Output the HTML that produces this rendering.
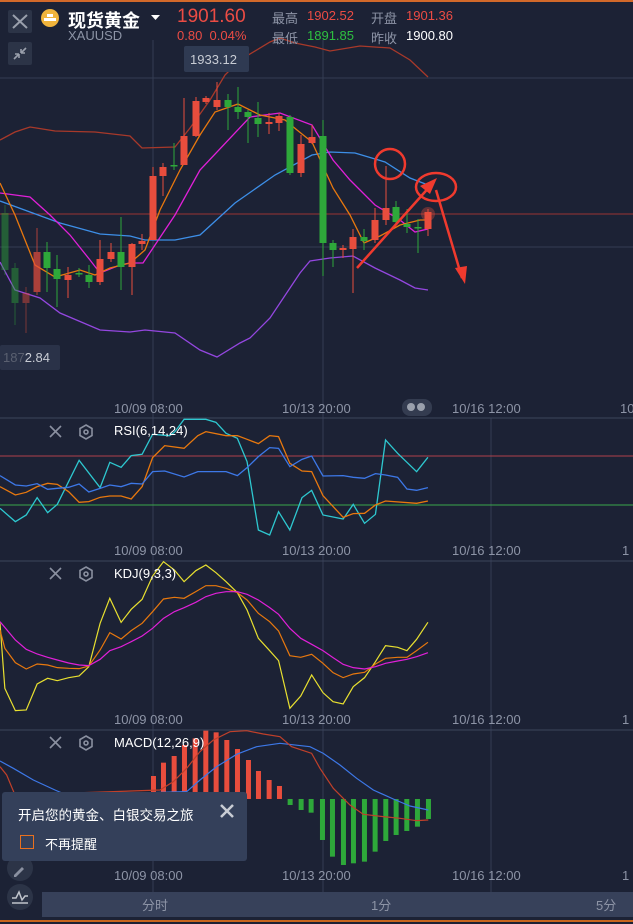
<!DOCTYPE html>
<html><head><meta charset="utf-8"><style>
body{margin:0;width:633px;height:924px;background:#1c2235;overflow:hidden;position:relative;font-family:"Liberation Sans","Noto Sans CJK SC",sans-serif}
.a{position:absolute;white-space:nowrap}
.ax{position:absolute;color:#8d94a6;font-size:13px}
</style></head><body>
<svg class="a" style="left:0;top:0" width="633" height="924">
<rect x="0" y="0" width="633" height="2" fill="#d2692a"/>
<g stroke="#343c52" stroke-width="1">
<line x1="153" y1="40" x2="153" y2="892"/><line x1="323" y1="40" x2="323" y2="892"/><line x1="491" y1="418" x2="491" y2="892"/>
<line x1="0" y1="78" x2="633" y2="78"/><line x1="0" y1="247" x2="633" y2="247"/>
</g>
<g stroke="#3d465c"><line x1="0" y1="418" x2="633" y2="418"/><line x1="0" y1="561" x2="633" y2="561"/><line x1="0" y1="730" x2="633" y2="730"/></g>
<line x1="0" y1="214" x2="633" y2="214" stroke="#9a3434"/>
<g fill="none" stroke-width="1.3">
<polyline stroke="#a8392a" points="0,140 15,132 30,127 55,131 95,132 130,136 142,148 175,147 190,128 210,100 225,75 240,60 270,42 280,38 295,43 315,47 330,51 360,46 390,48 410,60 428,77"/>
<polyline stroke="#3d8fe8" points="0,201 30,212 60,223 100,234 130,236 145,240 175,240 200,235 235,203 275,175 312,155 330,152 355,153 385,162 410,178 428,185"/>
<polyline stroke="#9447e0" points="0,262 15,290 40,298 60,313 100,330 130,332 145,330 175,333 200,350 217,357 240,343 250,338 270,318 300,273 310,261 330,258 353,256 375,268 400,280 415,288 428,290"/>
<polyline stroke="#e020d8" points="0,193 30,197 50,215 70,235 90,260 100,273 120,265 130,263 143,263 155,245 175,215 200,170 250,117 280,113 312,125 333,160 350,180 375,205 400,220 415,232 428,229"/>
<polyline stroke="#e8780e" points="0,183 15,215 35,265 55,277 80,270 95,275 110,268 130,263 145,250 160,210 180,170 200,135 215,112 238,104 260,115 285,120 297,130 312,142 333,188 350,215 364,243 380,236 400,225 420,220 428,220"/>
</g>
<g stroke-width="1">
<g opacity="0.45"><line x1="5" y1="205" x2="5" y2="275" stroke="#2ea83a"/><rect x="1.5" y="213" width="7" height="57" fill="#2ea83a"/>
<line x1="15" y1="263" x2="15" y2="325" stroke="#2ea83a"/><rect x="11.5" y="268" width="7" height="35" fill="#2ea83a"/>
<line x1="26" y1="287" x2="26" y2="333" stroke="#e84d3d"/><rect x="22.5" y="293" width="7" height="10" fill="#e84d3d"/></g>
<g opacity="0.7"><line x1="37" y1="228" x2="37" y2="295" stroke="#e84d3d"/><rect x="33.5" y="252" width="7" height="40" fill="#e84d3d"/></g>
</g>
<g>
<path stroke="#2ea83a" d="M47 242V292M57 255V307M79 268V277M89 265V288M121 217V290M174 143V170M228 94V130M238 87V119M248 110V143M258 102V137M290 115V175M323 120V276M333 240V267M364 229V250M396 201V225M407 209V233M418 219V253"/>
<path stroke="#e84d3d" d="M68 267V298M100 240V285M111 243V262M132 243V295M142 234V250M153 167V240M163 163V196M184 98V165M196 97V137M206 96V104M217 82V110M269 113V134M279 113V131M301 135V177M312 125V144M343 245V258M353 229V293M375 208V243M386 166V225M428 209V236"/>
<g fill="#2ea83a"><rect x="43.5" y="252" width="7" height="16"/><rect x="53.5" y="269" width="7" height="10"/><rect x="75.5" y="273" width="7" height="1.5"/><rect x="85.5" y="275" width="7" height="7"/><rect x="117.5" y="252" width="7" height="15"/><rect x="170.5" y="165" width="7" height="1.5"/><rect x="224.5" y="100" width="7" height="7"/><rect x="234.5" y="107" width="7" height="5"/><rect x="244.5" y="112" width="7" height="5"/><rect x="254.5" y="118" width="7" height="6"/><rect x="286.5" y="117" width="7" height="56"/><rect x="319.5" y="136" width="7" height="107"/><rect x="329.5" y="243" width="7" height="7"/><rect x="360.5" y="237" width="7" height="4"/><rect x="392.5" y="207" width="7" height="15"/><rect x="403.5" y="224" width="7" height="3"/><rect x="414.5" y="227" width="7" height="1.5"/></g>
<g fill="#e84d3d"><rect x="64.5" y="275" width="7" height="5"/><rect x="96.5" y="259" width="7" height="23"/><rect x="107.5" y="252" width="7" height="7"/><rect x="128.5" y="244" width="7" height="23"/><rect x="138.5" y="241" width="7" height="3"/><rect x="149.5" y="176" width="7" height="64"/><rect x="159.5" y="167" width="7" height="9"/><rect x="180.5" y="136" width="7" height="29"/><rect x="192.5" y="101" width="7" height="35"/><rect x="202.5" y="98" width="7" height="4"/><rect x="213.5" y="100" width="7" height="7"/><rect x="265.5" y="122" width="7" height="2"/><rect x="275.5" y="116" width="7" height="7"/><rect x="297.5" y="144" width="7" height="29"/><rect x="308.5" y="137" width="7" height="6"/><rect x="339.5" y="248" width="7" height="2"/><rect x="349.5" y="237" width="7" height="12"/><rect x="371.5" y="220" width="7" height="20"/><rect x="382.5" y="208" width="7" height="12"/><rect x="424.5" y="212" width="7" height="17"/></g>
</g>
<circle cx="428" cy="214" r="7" fill="#e84d3d" opacity="0.35"/>
<g stroke="#f03a2e" stroke-width="2.5" fill="none">
<circle cx="390" cy="164" r="15"/><ellipse cx="436" cy="187" rx="20" ry="14"/>
<line x1="357" y1="268" x2="432" y2="184"/><line x1="436" y1="190" x2="462" y2="278"/>
</g>
<path d="M437 178 L420 186 L430 194Z M465 284 L455 268 L467 266Z" fill="#f03a2e"/>
<line x1="0" y1="456" x2="633" y2="456" stroke="#b0404a"/><line x1="0" y1="505" x2="633" y2="505" stroke="#3aa84a"/>
<g transform="translate(0,395) scale(0.4037,0.3333)" fill="none">
<polyline vector-effect="non-scaling-stroke" stroke-width="1.3" stroke="#2ec8d0" points="0,340 38,380 65,360 92,308 118,353 142,328 196,196 248,278 272,202 300,217 325,182 352,178 378,118 420,122 432,112 456,73 510,73 535,82 560,115 588,130 612,200 640,405 668,420 690,350 718,405 748,308 772,286 800,360 850,372 875,328 903,385 930,358 955,135 985,175 1032,230 1060,187"/>
<polyline vector-effect="non-scaling-stroke" stroke-width="1.3" stroke="#e8780e" points="0,275 38,300 65,292 92,275 118,265 142,268 170,290 196,322 220,320 248,307 272,303 300,303 325,312 352,275 378,188 408,152 456,160 490,122 510,110 560,122 588,122 612,133 640,146 668,122 690,125 718,205 748,228 772,230 800,302 850,367 875,356 903,355 930,330 955,318 1032,325 1060,318"/>
<polyline vector-effect="non-scaling-stroke" stroke-width="1.3" stroke="#3d78e8" points="0,242 38,270 65,273 92,266 118,283 142,280 170,277 196,267 220,291 248,280 272,270 300,275 325,265 352,267 378,230 408,228 456,246 490,230 560,230 588,242 612,218 640,185 668,158 690,160 718,215 748,193 772,183 800,243 850,242 875,247 903,250 930,236 955,240 985,247 1008,282 1032,286 1060,278"/>
</g>
<g transform="translate(0,560) scale(0.4037,0.3333)" fill="none">
<polyline vector-effect="non-scaling-stroke" stroke-width="1.2" stroke="#e8e030" points="0,190 12,385 38,452 65,450 92,372 118,355 142,362 170,353 196,348 220,320 248,190 272,115 300,187 325,148 352,118 378,48 405,5 432,30 456,65 485,32 510,15 535,38 560,65 588,98 612,150 640,235 668,272 690,302 718,445 745,408 772,345 800,398 825,425 850,432 875,380 903,353 930,305 955,257 985,262 1008,272 1032,238 1060,187"/>
<polyline vector-effect="non-scaling-stroke" stroke-width="1.2" stroke="#e8780e" points="0,210 12,265 38,308 65,327 92,312 118,315 142,323 170,325 196,326 220,318 248,270 272,218 300,237 325,212 352,190 378,155 405,117 432,112 456,115 485,95 510,77 535,77 560,85 588,98 612,120 640,160 668,185 690,213 718,287 745,292 772,283 800,310 825,338 850,353 875,342 903,337 930,312 955,295 985,292 1008,292 1032,272 1060,247"/>
<polyline vector-effect="non-scaling-stroke" stroke-width="1.2" stroke="#e020d8" points="0,185 38,240 65,268 92,282 118,292 142,300 170,309 196,315 220,317 248,298 272,272 300,260 325,245 352,228 378,205 405,175 432,155 456,143 485,127 510,110 535,100 560,95 588,95 612,103 640,120 668,143 690,163 718,205 745,235 772,253 800,272 825,293 850,313 875,323 903,327 930,320 955,310 985,303 1008,298 1032,290 1060,278"/>
</g>
<g transform="translate(0,725) scale(0.3333)">
<g fill="#e84d3d"><rect x="453" y="153" width="15" height="69"/><rect x="483" y="113" width="15" height="109"/><rect x="515" y="93" width="15" height="129"/><rect x="546" y="60" width="15" height="162"/><rect x="578" y="40" width="15" height="182"/><rect x="610" y="17" width="15" height="205"/><rect x="641" y="22" width="15" height="200"/><rect x="673" y="45" width="15" height="177"/><rect x="705" y="72" width="15" height="150"/><rect x="738" y="105" width="15" height="117"/><rect x="768" y="138" width="15" height="84"/><rect x="800" y="165" width="15" height="57"/><rect x="831" y="183" width="15" height="39"/></g>
<g fill="#2ea83a"><rect x="863" y="222" width="15" height="18"/><rect x="896" y="222" width="15" height="33"/><rect x="926" y="222" width="15" height="41"/><rect x="960" y="222" width="15" height="123"/><rect x="990" y="222" width="15" height="173"/><rect x="1023" y="222" width="15" height="198"/><rect x="1053" y="222" width="15" height="193"/><rect x="1086" y="222" width="15" height="188"/><rect x="1118" y="222" width="15" height="158"/><rect x="1150" y="222" width="15" height="126"/><rect x="1181" y="222" width="15" height="108"/><rect x="1213" y="222" width="15" height="96"/><rect x="1245" y="222" width="15" height="83"/><rect x="1278" y="222" width="15" height="60"/></g>
<polyline vector-effect="non-scaling-stroke" fill="none" stroke="#3d78e8" stroke-width="1.2" points="0,108 40,130 100,165 165,195 200,210 560,200 600,165 650,125 710,88 770,65 840,55 930,65 970,85 1020,120 1070,160 1120,195 1180,222 1230,243 1285,255"/>
<polyline vector-effect="non-scaling-stroke" fill="none" stroke="#c0402a" stroke-width="1.2" points="0,125 20,150 45,210 480,195 520,170 560,130 600,80 640,45 690,20 740,17 790,27 840,35 875,65 935,85 960,130 1000,190 1050,240 1090,268 1150,275 1200,280 1250,287 1285,285"/>
</g>
<g stroke="#8a90a0" stroke-width="1.6" fill="none">
<path d="M50 426l11 11M61 426l-11 11M50 568l11 11M61 568l-11 11M50 737l11 11M61 737l-11 11"/>
<path d="M86 425l6 3.5v7l-6 3.5-6-3.5v-7zM86 567l6 3.5v7l-6 3.5-6-3.5v-7zM86 736l6 3.5v7l-6 3.5-6-3.5v-7z"/>
<circle cx="86" cy="432" r="2"/><circle cx="86" cy="574" r="2"/><circle cx="86" cy="743" r="2"/>
</g>
<circle cx="20" cy="868" r="13" fill="#2c3447"/>
<path d="M14 875l8-8 2 2-8 8h-2z" fill="#8a90a0"/>
<circle cx="20" cy="897" r="13" fill="#2c3447"/>
<path d="M12 898h4l3-6 3 8 3-4h3M12 903h16" stroke="#c0c4cc" stroke-width="1.5" fill="none"/>
<rect x="42" y="892" width="591" height="25" fill="#37415a"/>
<rect x="0" y="920" width="633" height="2" fill="#c8661e"/>
<rect x="402" y="399" width="30" height="17" rx="8" fill="#343c50"/>
<circle cx="411" cy="407" r="4" fill="#9aa0ac"/><circle cx="421" cy="407" r="4" fill="#9aa0ac"/>
<!-- header buttons -->
<rect x="8" y="10" width="24" height="23" rx="2" fill="#2c3447"/>
<path d="M13 15l14 13M27 15l-14 13" stroke="#9aa0ac" stroke-width="2"/>
<rect x="8" y="42" width="24" height="23" rx="2" fill="#2c3447"/>
<path d="M14 59l5-5M19 54v4M19 54h-4M26 48l-5 5M21 53v-4M21 53h4" stroke="#9aa0ac" stroke-width="1.6" fill="none"/>
<circle cx="50" cy="18" r="9" fill="#f0b43c"/>
<path d="M47 14h6v3h-6zM44 18h6v3h-6zM50 18h6v3h-6z" fill="#fff"/>
<path d="M151 15h9l-4.5 5z" fill="#fff"/>
<rect x="184" y="46" width="65" height="26" rx="2" fill="#2f3a52"/>
<rect x="0" y="345" width="60" height="25" rx="2" fill="#2a3248"/>
</svg>
<div class="a" style="left:68px;top:7px;color:#fff;font-size:18px;font-weight:bold">现货黄金</div>
<div class="a" style="left:68px;top:28px;color:#8d94a6;font-size:13px">XAUUSD</div>
<div class="a" style="left:177px;top:6px;color:#ec4c44;font-size:19px">1901.60</div>
<div class="a" style="left:177px;top:28px;color:#ec4c44;font-size:13px">0.80&nbsp;&nbsp;0.04%</div>
<div class="a" style="left:272px;top:8px;color:#8d94a6;font-size:13px">最高</div>
<div class="a" style="left:307px;top:8px;color:#ec4c44;font-size:13px">1902.52</div>
<div class="a" style="left:371px;top:8px;color:#8d94a6;font-size:13px">开盘</div>
<div class="a" style="left:406px;top:8px;color:#ec4c44;font-size:13px">1901.36</div>
<div class="a" style="left:272px;top:28px;color:#8d94a6;font-size:13px">最低</div>
<div class="a" style="left:307px;top:28px;color:#2ec040;font-size:13px">1891.85</div>
<div class="a" style="left:371px;top:28px;color:#8d94a6;font-size:13px">昨收</div>
<div class="a" style="left:406px;top:28px;color:#fff;font-size:13px">1900.80</div>
<div class="a" style="left:190px;top:52px;color:#c8ccd4;font-size:13px">1933.12</div>
<div class="a" style="left:3px;top:350px;color:#c8ccd4;font-size:13px"><span style="color:#5a6070">187</span>2.84</div>
<div class="ax" style="left:114px;top:401px">10/09 08:00</div>
<div class="ax" style="left:282px;top:401px">10/13 20:00</div>
<div class="ax" style="left:452px;top:401px">10/16 12:00</div>
<div class="ax" style="left:620px;top:401px">10/</div>
<div class="ax" style="left:114px;top:543px">10/09 08:00</div>
<div class="ax" style="left:282px;top:543px">10/13 20:00</div>
<div class="ax" style="left:452px;top:543px">10/16 12:00</div>
<div class="ax" style="left:622px;top:543px">1</div>
<div class="ax" style="left:114px;top:712px">10/09 08:00</div>
<div class="ax" style="left:282px;top:712px">10/13 20:00</div>
<div class="ax" style="left:452px;top:712px">10/16 12:00</div>
<div class="ax" style="left:622px;top:712px">1</div>
<div class="ax" style="left:114px;top:868px">10/09 08:00</div>
<div class="ax" style="left:282px;top:868px">10/13 20:00</div>
<div class="ax" style="left:452px;top:868px">10/16 12:00</div>
<div class="ax" style="left:622px;top:868px">1</div>
<div class="a" style="left:114px;top:423px;color:#fff;font-size:13px">RSI(6,14,24)</div>
<div class="a" style="left:114px;top:566px;color:#fff;font-size:13px">KDJ(9,3,3)</div>
<div class="a" style="left:114px;top:735px;color:#fff;font-size:13px">MACD(12,26,9)</div>
<div class="a" style="left:142px;top:895px;color:#8d94a6;font-size:13px">分时</div>
<div class="a" style="left:371px;top:895px;color:#8d94a6;font-size:13px">1分</div>
<div class="a" style="left:596px;top:895px;color:#8d94a6;font-size:13px">5分</div>
<div class="a" style="left:2px;top:792px;width:245px;height:69px;background:#34405a;border-radius:3px">
<div class="a" style="left:16px;top:12px;color:#fff;font-size:13.5px">开启您的黄金、白银交易之旅</div>
<svg class="a" style="left:217px;top:11px" width="16" height="16"><path d="M2 2l12 12M14 2L2 14" stroke="#c8ccd4" stroke-width="2.5"/></svg>
<div class="a" style="left:18px;top:43px;width:12px;height:12px;border:1.5px solid #e8701e"></div>
<div class="a" style="left:43px;top:42px;color:#fff;font-size:13px">不再提醒</div>
</div>
</body></html>
